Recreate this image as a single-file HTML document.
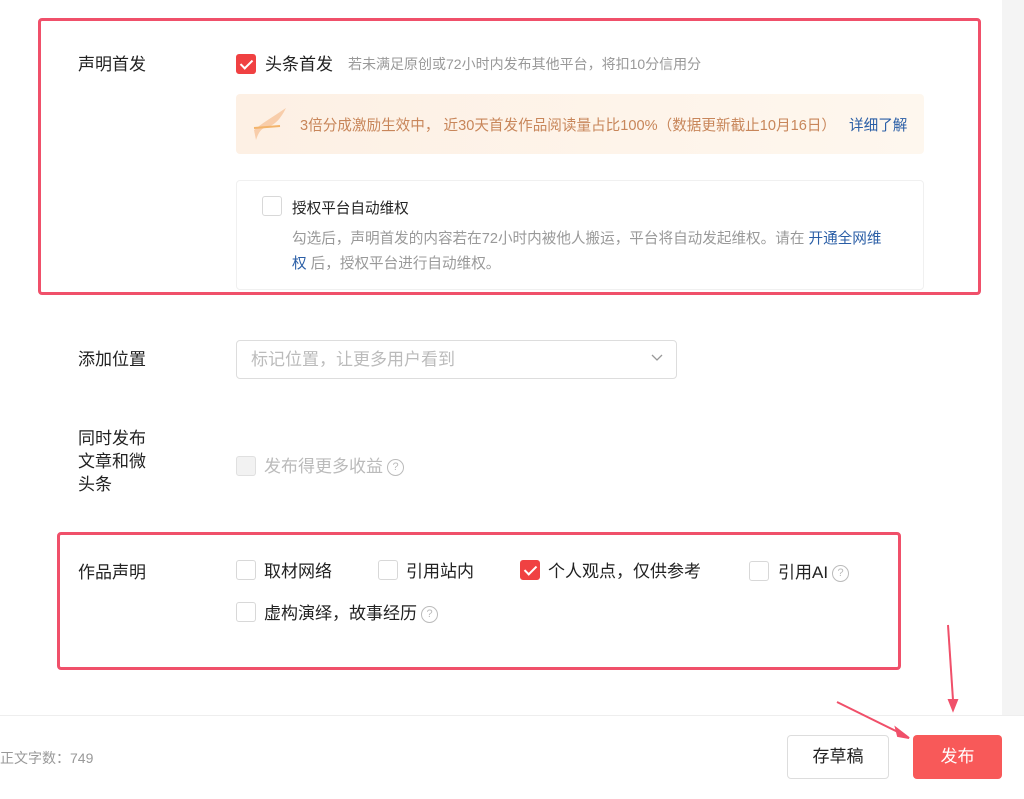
<!DOCTYPE html>
<html><head><meta charset="utf-8"><style>
*{margin:0;padding:0;box-sizing:border-box}
body{width:1024px;height:799px;position:relative;background:#fff;font-family:"Liberation Sans","Noto Sans CJK SC",sans-serif;overflow:hidden;color:#222}
.a{position:absolute;white-space:nowrap}
.lbl{font-size:17px;color:#222}
.cb{position:absolute;width:20px;height:20px;border:1px solid #d8d8d8;border-radius:3px;background:#fff}
.cb.on{background:#f04142;border-color:#f04142}
.cb.on:after{content:"";position:absolute;left:6px;top:2px;width:5px;height:10px;border:solid #fff;border-width:0 2px 2px 0;transform:rotate(45deg)}
.cb.dis{background:#f2f2f2;border-color:#e0e0e0}
.q{display:inline-block;width:17px;height:17px;border:1.5px solid #bbb;border-radius:50%;font-size:11px;line-height:14px;text-align:center;color:#bbb;vertical-align:2px;margin-left:4px}
.red{position:absolute;border:3px solid #f0506a;border-radius:4px}
</style></head><body>
<div class="a" style="left:1002px;top:0;width:22px;height:715px;background:#f4f4f4"></div>

<div class="a lbl" style="left:78px;top:50px">声明首发</div>
<div class="cb on" style="left:236px;top:54px"></div>
<div class="a" style="left:265px;top:50px;font-size:17px;color:#222">头条首发</div>
<div class="a" style="left:348px;top:54px;font-size:14px;color:#999">若未满足原创或72小时内发布其他平台，将扣10分信用分</div>

<div class="a" style="left:236px;top:94px;width:688px;height:60px;background:linear-gradient(90deg,#fdf0e4,#fef7ee);border-radius:4px"></div>
<svg class="a" style="left:250px;top:104px" width="40" height="40" viewBox="0 0 40 40"><path d="M4 26 C14 18 24 12 36 4 C30 16 24 22 14 24 C10 26 8 30 6 36 Z" fill="#f7c9a3" opacity=".9"/><path d="M4 24 L30 22" stroke="#f3b46b" stroke-width="2"/></svg>
<div class="a" style="left:300px;top:114px;font-size:14.6px;color:#c8865a">3倍分成激励生效中， 近30天首发作品阅读量占比100%（数据更新截止10月16日）</div>
<div class="a" style="left:849px;top:114px;font-size:14.6px;color:#2a5ea6">详细了解</div>

<div class="a" style="left:236px;top:180px;width:688px;height:110px;border:1px solid #f0f0f0;border-radius:4px"></div>
<div class="cb" style="left:262px;top:196px"></div>
<div class="a" style="left:292px;top:197px;font-size:14.6px;color:#222">授权平台自动维权</div>
<div class="a" style="left:292px;top:227px;font-size:14.6px;color:#999">勾选后，声明首发的内容若在72小时内被他人搬运，平台将自动发起维权。请在 <span style="color:#2a5ea6">开通全网维</span></div>
<div class="a" style="left:292px;top:252px;font-size:14.6px;color:#999"><span style="color:#2a5ea6">权</span> 后，授权平台进行自动维权。</div>

<div class="red" style="left:38px;top:18px;width:943px;height:277px"></div>

<div class="a lbl" style="left:78px;top:345px">添加位置</div>
<div class="a" style="left:236px;top:340px;width:441px;height:39px;border:1px solid #ddd;border-radius:4px"></div>
<div class="a" style="left:251px;top:345px;font-size:17px;color:#bbb">标记位置，让更多用户看到</div>
<svg class="a" style="left:650px;top:352px" width="14" height="12"><path d="M2 3 L7 8 L12 3" stroke="#999" fill="none" stroke-width="1.3"/></svg>

<div class="a lbl" style="left:78px;top:427px;line-height:23px;white-space:normal;width:80px">同时发布<br>文章和微<br>头条</div>
<div class="cb dis" style="left:236px;top:456px"></div>
<div class="a" style="left:264px;top:452px;font-size:17px;color:#bbb">发布得更多收益<span class="q">?</span></div>

<div class="a lbl" style="left:78px;top:558px">作品声明</div>
<div class="cb" style="left:236px;top:560px"></div>
<div class="a" style="left:264px;top:557px;font-size:17px">取材网络</div>
<div class="cb" style="left:378px;top:560px"></div>
<div class="a" style="left:406px;top:557px;font-size:17px">引用站内</div>
<div class="cb on" style="left:520px;top:560px"></div>
<div class="a" style="left:548px;top:557px;font-size:17px">个人观点，仅供参考</div>
<div class="cb" style="left:749px;top:561px"></div>
<div class="a" style="left:778px;top:558px;font-size:17px">引用AI<span class="q">?</span></div>
<div class="cb" style="left:236px;top:602px"></div>
<div class="a" style="left:264px;top:599px;font-size:17px">虚构演绎，故事经历<span class="q">?</span></div>

<div class="red" style="left:57px;top:532px;width:844px;height:138px"></div>

<div class="a" style="left:0;top:715px;width:1024px;height:84px;border-top:1px solid #eee;background:#fff"></div>
<div class="a" style="left:0;top:748px;font-size:14px;color:#999">正文字数：749</div>
<div class="a" style="left:787px;top:735px;width:102px;height:44px;border:1px solid #ddd;border-radius:4px;font-size:17px;line-height:42px;text-align:center">存草稿</div>
<div class="a" style="left:913px;top:735px;width:89px;height:44px;background:#f85959;border-radius:4px;font-size:17px;line-height:44px;text-align:center;color:#fff">发布</div>

<svg class="a" style="left:0;top:0" width="1024" height="799"><g stroke="#f0506a" stroke-width="2" fill="#f0506a"><line x1="948" y1="625" x2="953" y2="700"/><path d="M949 700 L957 700 L953 710 Z"/><line x1="837" y1="702" x2="900" y2="733"/><path d="M896 728 L909 738 L898 736 Z"/></g></svg>
</body></html>
